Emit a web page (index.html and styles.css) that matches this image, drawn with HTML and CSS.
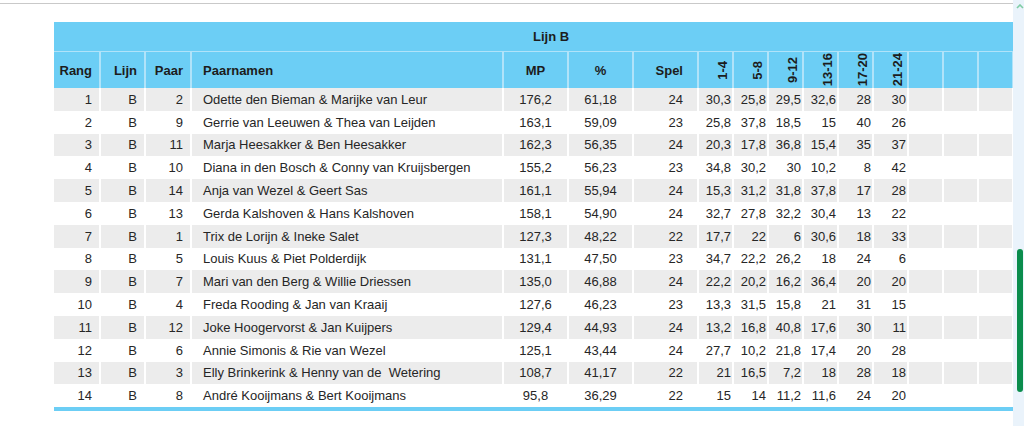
FILE: index.html
```html
<!DOCTYPE html>
<html lang="nl">
<head>
<meta charset="utf-8">
<title>Lijn B</title>
<link rel="stylesheet" href="styles.css">
</head>
<body>
<div class="page">
  <div class="content">
    <div class="topline"></div>
    <div class="wrap">
      <table class="uitslag">
        <colgroup>
          <col class="c-rang"><col class="c-lijn"><col class="c-paar"><col class="c-naam">
          <col class="c-mp"><col class="c-pct"><col class="c-spel">
          <col class="c-r"><col class="c-r"><col class="c-r"><col class="c-r"><col class="c-r"><col class="c-r">
          <col class="c-r"><col class="c-r"><col class="c-r"><col class="c-r">
        </colgroup>
        <thead>
          <tr class="title"><th colspan="17">Lijn B</th></tr>
          <tr class="head">
            <th class="num">Rang</th>
            <th class="num">Lijn</th>
            <th class="num">Paar</th>
            <th class="naam">Paarnamen</th>
            <th class="mid">MP</th>
            <th class="mid">%</th>
            <th class="spel">Spel</th>
            <th class="rot"><span>1-4</span></th>
            <th class="rot"><span>5-8</span></th>
            <th class="rot"><span>9-12</span></th>
            <th class="rot"><span>13-16</span></th>
            <th class="rot"><span>17-20</span></th>
            <th class="rot"><span>21-24</span></th>
            <th></th><th></th><th></th><th></th>
          </tr>
        </thead>
        <tbody>
          <tr><td class="num">1</td><td class="num">B</td><td class="num">2</td><td class="naam">Odette den Bieman &amp; Marijke van Leur</td><td class="mid">176,2</td><td class="mid">61,18</td><td class="spel">24</td><td class="r">30,3</td><td class="r">25,8</td><td class="r">29,5</td><td class="r">32,6</td><td class="r">28</td><td class="r">30</td><td></td><td></td><td></td><td></td></tr>
          <tr><td class="num">2</td><td class="num">B</td><td class="num">9</td><td class="naam">Gerrie van Leeuwen &amp; Thea van Leijden</td><td class="mid">163,1</td><td class="mid">59,09</td><td class="spel">23</td><td class="r">25,8</td><td class="r">37,8</td><td class="r">18,5</td><td class="r">15</td><td class="r">40</td><td class="r">26</td><td></td><td></td><td></td><td></td></tr>
          <tr><td class="num">3</td><td class="num">B</td><td class="num">11</td><td class="naam">Marja Heesakker &amp; Ben Heesakker</td><td class="mid">162,3</td><td class="mid">56,35</td><td class="spel">24</td><td class="r">20,3</td><td class="r">17,8</td><td class="r">36,8</td><td class="r">15,4</td><td class="r">35</td><td class="r">37</td><td></td><td></td><td></td><td></td></tr>
          <tr><td class="num">4</td><td class="num">B</td><td class="num">10</td><td class="naam">Diana in den Bosch &amp; Conny van Kruijsbergen</td><td class="mid">155,2</td><td class="mid">56,23</td><td class="spel">23</td><td class="r">34,8</td><td class="r">30,2</td><td class="r">30</td><td class="r">10,2</td><td class="r">8</td><td class="r">42</td><td></td><td></td><td></td><td></td></tr>
          <tr><td class="num">5</td><td class="num">B</td><td class="num">14</td><td class="naam">Anja van Wezel &amp; Geert Sas</td><td class="mid">161,1</td><td class="mid">55,94</td><td class="spel">24</td><td class="r">15,3</td><td class="r">31,2</td><td class="r">31,8</td><td class="r">37,8</td><td class="r">17</td><td class="r">28</td><td></td><td></td><td></td><td></td></tr>
          <tr><td class="num">6</td><td class="num">B</td><td class="num">13</td><td class="naam">Gerda Kalshoven &amp; Hans Kalshoven</td><td class="mid">158,1</td><td class="mid">54,90</td><td class="spel">24</td><td class="r">32,7</td><td class="r">27,8</td><td class="r">32,2</td><td class="r">30,4</td><td class="r">13</td><td class="r">22</td><td></td><td></td><td></td><td></td></tr>
          <tr><td class="num">7</td><td class="num">B</td><td class="num">1</td><td class="naam">Trix de Lorijn &amp; Ineke Salet</td><td class="mid">127,3</td><td class="mid">48,22</td><td class="spel">22</td><td class="r">17,7</td><td class="r">22</td><td class="r">6</td><td class="r">30,6</td><td class="r">18</td><td class="r">33</td><td></td><td></td><td></td><td></td></tr>
          <tr><td class="num">8</td><td class="num">B</td><td class="num">5</td><td class="naam">Louis Kuus &amp; Piet Polderdijk</td><td class="mid">131,1</td><td class="mid">47,50</td><td class="spel">23</td><td class="r">34,7</td><td class="r">22,2</td><td class="r">26,2</td><td class="r">18</td><td class="r">24</td><td class="r">6</td><td></td><td></td><td></td><td></td></tr>
          <tr><td class="num">9</td><td class="num">B</td><td class="num">7</td><td class="naam">Mari van den Berg &amp; Willie Driessen</td><td class="mid">135,0</td><td class="mid">46,88</td><td class="spel">24</td><td class="r">22,2</td><td class="r">20,2</td><td class="r">16,2</td><td class="r">36,4</td><td class="r">20</td><td class="r">20</td><td></td><td></td><td></td><td></td></tr>
          <tr><td class="num">10</td><td class="num">B</td><td class="num">4</td><td class="naam">Freda Rooding &amp; Jan van Kraaij</td><td class="mid">127,6</td><td class="mid">46,23</td><td class="spel">23</td><td class="r">13,3</td><td class="r">31,5</td><td class="r">15,8</td><td class="r">21</td><td class="r">31</td><td class="r">15</td><td></td><td></td><td></td><td></td></tr>
          <tr><td class="num">11</td><td class="num">B</td><td class="num">12</td><td class="naam">Joke Hoogervorst &amp; Jan Kuijpers</td><td class="mid">129,4</td><td class="mid">44,93</td><td class="spel">24</td><td class="r">13,2</td><td class="r">16,8</td><td class="r">40,8</td><td class="r">17,6</td><td class="r">30</td><td class="r">11</td><td></td><td></td><td></td><td></td></tr>
          <tr><td class="num">12</td><td class="num">B</td><td class="num">6</td><td class="naam">Annie Simonis &amp; Rie van Wezel</td><td class="mid">125,1</td><td class="mid">43,44</td><td class="spel">24</td><td class="r">27,7</td><td class="r">10,2</td><td class="r">21,8</td><td class="r">17,4</td><td class="r">20</td><td class="r">28</td><td></td><td></td><td></td><td></td></tr>
          <tr><td class="num">13</td><td class="num">B</td><td class="num">3</td><td class="naam">Elly Brinkerink &amp; Henny van de&nbsp; Wetering</td><td class="mid">108,7</td><td class="mid">41,17</td><td class="spel">22</td><td class="r">21</td><td class="r">16,5</td><td class="r">7,2</td><td class="r">18</td><td class="r">28</td><td class="r">18</td><td></td><td></td><td></td><td></td></tr>
          <tr><td class="num">14</td><td class="num">B</td><td class="num">8</td><td class="naam">André Kooijmans &amp; Bert Kooijmans</td><td class="mid">95,8</td><td class="mid">36,29</td><td class="spel">22</td><td class="r">15</td><td class="r">14</td><td class="r">11,2</td><td class="r">11,6</td><td class="r">24</td><td class="r">20</td><td></td><td></td><td></td><td></td></tr>
        </tbody>
      </table>
    </div>
  </div>
  <div class="scrollbar">
    <svg class="arrow" width="8" height="5" viewBox="0 0 8 5"><path d="M1 4 L4 1 L7 4" fill="none" stroke="#7fcca4" stroke-width="1.6"/></svg>
    <div class="track"><div class="thumb"></div></div>
  </div>
</div>
</body>
</html>
```

FILE: styles.css
```css
html, body {
  margin: 0;
  padding: 0;
  background: #ffffff;
}
body {
  font-family: "Liberation Sans", Arial, sans-serif;
  font-size: 13px;
  color: #262626;
}
.page {
  display: flex;
  width: 1024px;
  height: 426px;
  overflow: hidden;
}
.content {
  flex: 1;
  min-width: 0;
  overflow: hidden;
}
.topline {
  height: 1px;
  margin-top: 3px;
  background: #c9c9c9;
}
.wrap {
  padding: 18px 0 0 54px;
}
.uitslag {
  border-collapse: collapse;
  table-layout: fixed;
  width: 994px;
  border-bottom: 4px solid #6ccef5;
}
.c-rang { width: 46px; }
.c-lijn { width: 45px; }
.c-paar { width: 46px; }
.c-naam { width: 312px; }
.c-mp, .c-pct, .c-spel { width: 65px; }
.c-r { width: 35px; }

.uitslag th {
  background: #6ccef5;
  color: #1c1c1c;
  font-weight: bold;
  padding: 0;
}
.title th {
  height: 29px;
  text-align: center;
  border-bottom: 1px solid #b0e3f9;
}
.head th {
  height: 36px;
  border-left: 2px solid #b0e3f9;
  vertical-align: middle;
}
.head th:first-child { border-left: none; }

.uitslag td {
  height: 22.8px;
  padding: 0;
  border-left: 2px solid #ffffff;
  white-space: nowrap;
  line-height: 15px;
}
.uitslag td:first-child { border-left: none; }
.uitslag tbody tr:nth-child(odd) td { background: #ececec; }

.num { text-align: right; padding-right: 7px !important; }
.naam { text-align: left; padding-left: 11px !important; }
.mid { text-align: center; }
.spel { text-align: right; padding-right: 14px !important; }
.r { text-align: right; padding-right: 1px !important; }
.rot { text-align: right; padding-right: 2px !important; }
.rot span {
  display: inline-block;
  writing-mode: vertical-rl;
  transform: rotate(180deg);
  line-height: 14px;
  vertical-align: middle;
}

.scrollbar {
  width: 11px;
  flex: none;
  background: #eaf3fb;
  display: flex;
  flex-direction: column;
  align-items: center;
}
.arrow {
  margin-top: 4px;
  margin-left: 2px;
}
.track {
  flex: 1;
  display: flex;
  flex-direction: column;
  padding-top: 240px;
}
.thumb {
  width: 6px;
  height: 143px;
  margin-left: 2px;
  border-radius: 3px;
  background: #0b8d4d;
}
```
